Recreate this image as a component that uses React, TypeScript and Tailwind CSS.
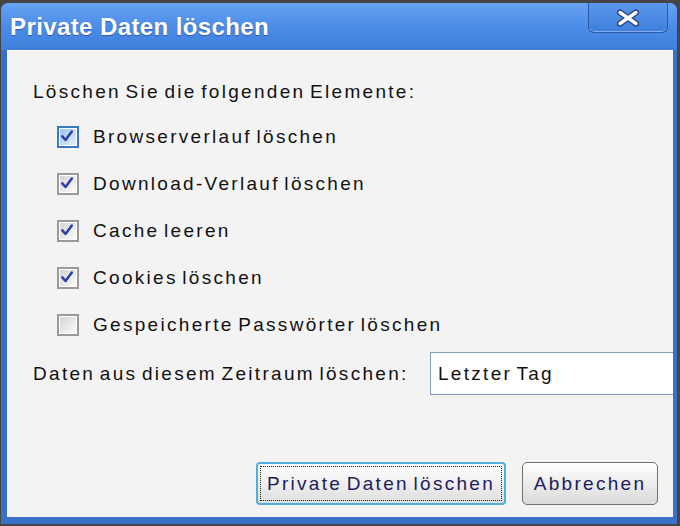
import React from "react";

const font = { fontFamily: '"Liberation Sans", Arial, sans-serif' };

function Check({ checked, focused }: { checked: boolean; focused?: boolean }) {
  return (
    <div
      className={`w-[22px] h-[22px] shrink-0 border-2 p-[1px] ${
        focused ? "border-[#3a78c0]" : "border-[#9a9a9a]"
      } bg-white`}
    >
      <div
        className={`w-full h-full relative ${
          focused
            ? "bg-gradient-to-br from-[#9cc2ec] to-[#e6f0fb]"
            : "bg-gradient-to-br from-[#d4d4d4] to-[#fbfbfb]"
        }`}
      >
        {checked && (
          <svg className="absolute inset-0" width="14" height="14" viewBox="0 0 14 14">
            <path d="M2.3 7.4 L5.5 11 L11.8 2.6" fill="none" stroke="#2b3fa6" strokeWidth="2.5" strokeLinecap="round" strokeLinejoin="round" />
          </svg>
        )}
      </div>
    </div>
  );
}

const items: { label: string; checked: boolean; focused?: boolean }[] = [
  { label: "Browserverlauf löschen", checked: true, focused: true },
  { label: "Download-Verlauf löschen", checked: true },
  { label: "Cache leeren", checked: true },
  { label: "Cookies löschen", checked: true },
  { label: "Gespeicherte Passwörter löschen", checked: false },
];

export default function App() {
  return (
    <div className="w-[680px] h-[526px] bg-[#454545] pt-[3px] pl-[1px] pr-[3px] pb-[2px] flex overflow-hidden" style={font}>
      <div className="flex-1 flex flex-col rounded-t-[7px] bg-[#3b70c8] overflow-hidden">
        <div className="h-[47px] shrink-0 flex justify-between bg-gradient-to-b from-[#66a3f3] via-[#4c8ce8] to-[#3f7fdd] pl-[9px] pr-[9px]">
          <div className="self-center text-white font-bold text-[24px] tracking-[0.4px] leading-none [text-shadow:0_1px_1px_rgba(0,0,50,0.35)]">
            Private Daten löschen
          </div>
          <div className="w-[80px] h-[30px] rounded-b-[6px] border border-t-0 border-[#2a5aa6] bg-gradient-to-b from-[#5b97ec] to-[#3f7edc] shadow-[inset_0_-1px_0_rgba(255,255,255,0.35)] flex items-center justify-center">
            <svg width="26" height="18" viewBox="0 0 26 18">
              <path d="M5 3.5 L21 14.5 M21 3.5 L5 14.5" stroke="#1f3f80" strokeWidth="6" strokeLinecap="round" />
              <path d="M5 3.5 L21 14.5 M21 3.5 L5 14.5" stroke="#ffffff" strokeWidth="3.4" strokeLinecap="round" />
            </svg>
          </div>
        </div>
        <div className="flex-1 ml-[6px] mr-[4px] mb-[7px] bg-[#f3f3f3] border-l border-t border-[#ffffff] overflow-hidden flex flex-col text-[19px] tracking-[2.3px] [word-spacing:-3px] text-[#111]">
          <div className="pt-[29px] pl-[25px] leading-[24px]">Löschen Sie die folgenden Elemente:</div>
          <div className="mt-[9px] pl-[49px] flex flex-col">
            {items.map((it) => (
              <div key={it.label} className="h-[47px] flex items-center gap-[14px]">
                <Check checked={it.checked} focused={it.focused} />
                <span className="leading-[24px]">{it.label}</span>
              </div>
            ))}
          </div>
          <div className="mt-[4px] pl-[25px] flex items-center">
            <div className="w-[397px] shrink-0 leading-[24px]">Daten aus diesem Zeitraum löschen:</div>
            <div className="w-[260px] shrink-0 h-[43px] bg-white border border-[#7f9db9] flex items-center pl-[7px] leading-[24px]">
              Letzter Tag
            </div>
          </div>
          <div className="mt-auto pb-[12px] pr-[15px] flex justify-end gap-[16px] text-[#1c1c5a]">
            <div className="w-[250px] h-[43px] rounded-[4px] border-2 border-[#52addb] bg-gradient-to-b from-[#ffffff] to-[#dedede] p-[2px]">
              <div className="w-full h-full border border-dotted border-[#222] flex items-center justify-center leading-none">
                Private Daten löschen
              </div>
            </div>
            <div className="w-[136px] h-[43px] rounded-[5px] border border-[#707070] bg-gradient-to-b from-[#ffffff] to-[#dadada] flex items-center justify-center leading-none">
              Abbrechen
            </div>
          </div>
        </div>
      </div>
    </div>
  );
}
